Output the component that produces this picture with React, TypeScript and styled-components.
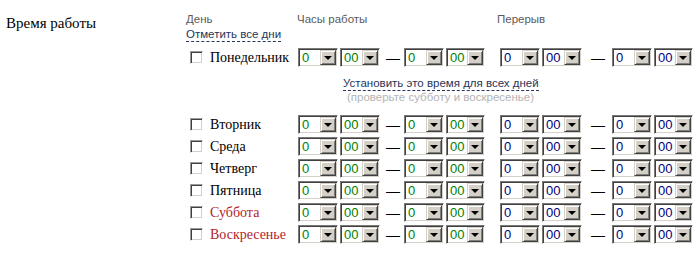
import styled, { createGlobalStyle } from "styled-components"

const GlobalStyle = createGlobalStyle`
body{
    margin: 0;
    background: #fff;
    font-family: "Liberation Serif", serif;
}
`;

const Page = styled.div`
    display: flex;
    padding-top: 12px;
`;

const SectionTitle = styled.div`
    width: 180px;
    padding-left: 6px;
    font-size: 15px;
    line-height: 18px;
    color: #000;
    padding-top: 2px;
`;

const Form = styled.div`
    display: flex;
    flex-direction: column;
`;

const HeaderRow = styled.div`
    display: flex;
    font-family: "Liberation Sans", sans-serif;
    font-size: 11.5px;
    line-height: 15px;
    color: #5a5a5a;
    margin-bottom: 6px;
`;

const HeadCell = styled.div<{ $w: number }>`
    width: ${p => p.$w}px;
    display: flex;
    flex-direction: column;
    align-items: flex-start;
`;

const DashedLink = styled.span`
    color: #26355a;
    border-bottom: 1px dashed #26355a;
    line-height: 14px;
    cursor: pointer;
`;

const Row = styled.div`
    display: flex;
    align-items: center;
    height: 19px;
    margin-bottom: 3px;
`;

const DayCell = styled.label<{ $weekend?: boolean }>`
    width: 112px;
    display: flex;
    align-items: center;
    padding-left: 4px;
    box-sizing: border-box;
    font-size: 14px;
    color: ${p => (p.$weekend ? "#b3242a" : "#000")};
`;

const Check = styled.span`
    width: 13px;
    height: 13px;
    box-sizing: border-box;
    background: #fff;
    border: 1px solid;
    border-color: #9a9a9a #fff #fff #9a9a9a;
    box-shadow: inset 1px 1px #404040, inset -1px -1px #d4d0c8;
    margin-right: 7px;
    flex: none;
`;

const Range = styled.div<{ $gap: number }>`
    display: flex;
    align-items: center;
    margin-right: ${p => p.$gap}px;
`;

const Dash = styled.span<{ $w: number }>`
    width: ${p => p.$w}px;
    text-align: center;
    font-family: "Liberation Sans", sans-serif;
    font-size: 14px;
    color: #000;
`;

const SelectBox = styled.div<{ $w: number }>`
    display: flex;
    width: ${p => p.$w}px;
    height: 19px;
    box-sizing: border-box;
    background: #fff;
    border: 1px solid;
    border-color: #7a7a7a #fff #fff #7a7a7a;
    box-shadow: inset 1px 1px #404040, inset -1px -1px #d4d0c8;
    padding: 1px;
    margin-right: 2px;
`;

const SelectValue = styled.span<{ $tone: string }>`
    flex: 1;
    padding-left: 2px;
    font-family: "Liberation Sans", sans-serif;
    font-size: 13px;
    line-height: 15px;
    color: ${p => p.$tone};
`;

const SelectButton = styled.span`
    width: 16px;
    height: 15px;
    box-sizing: border-box;
    background: #d4d0c8;
    border: 1px solid;
    border-color: #d4d0c8 #404040 #404040 #d4d0c8;
    box-shadow: inset 1px 1px #fff, inset -1px -1px #808080;
    display: flex;
    align-items: center;
    justify-content: center;

    &::after{
        content: "";
        border-left: 4px solid transparent;
        border-right: 4px solid transparent;
        border-top: 4px solid #000;
        margin-top: 1px;
    }
`;

const ApplyBlock = styled.div`
    display: flex;
    flex-direction: column;
    align-items: flex-start;
    padding-left: 157px;
    margin-top: 6px;
    margin-bottom: 11px;
    font-family: "Liberation Sans", sans-serif;
    font-size: 11.5px;
    line-height: 13px;
`;

const Hint = styled.span`
    color: #b4b4b4;
    padding-left: 4px;
`;

type selectProps = { value: string, width: number, tone: string }

const Select = ({ value, width, tone }: selectProps) => (
    <SelectBox $w={width}>
        <SelectValue $tone={tone}>{value}</SelectValue>
        <SelectButton />
    </SelectBox>
)

const TimeRange = ({ tone, dash, gap }: { tone: string, dash: number, gap: number }) => (
    <Range $gap={gap}>
        <Select value="0" width={40} tone={tone} />
        <Select value="00" width={40} tone={tone} />
        <Dash $w={dash}>—</Dash>
        <Select value="0" width={40} tone={tone} />
        <Select value="00" width={39} tone={tone} />
    </Range>
)

const DayRow = ({ name, weekend }: { name: string, weekend?: boolean }) => (
    <Row>
        <DayCell $weekend={weekend}><Check />{name}</DayCell>
        <TimeRange tone="#008000" dash={22} gap={13} />
        <TimeRange tone="#000080" dash={28} gap={0} />
    </Row>
)

const days = [
    { name: "Вторник" },
    { name: "Среда" },
    { name: "Четверг" },
    { name: "Пятница" },
    { name: "Суббота", weekend: true },
    { name: "Воскресенье", weekend: true },
]

export default function App() {
    return (<>
        <GlobalStyle />
        <Page>
            <SectionTitle>Время работы</SectionTitle>
            <Form>
                <HeaderRow>
                    <HeadCell $w={111}>
                        <span>День</span>
                        <DashedLink>Отметить все дни</DashedLink>
                    </HeadCell>
                    <HeadCell $w={200}>Часы работы</HeadCell>
                    <HeadCell $w={190}>Перерыв</HeadCell>
                </HeaderRow>
                <DayRow name="Понедельник" />
                <ApplyBlock>
                    <DashedLink>Установить это время для всех дней</DashedLink>
                    <Hint>(проверьте субботу и воскресенье)</Hint>
                </ApplyBlock>
                {days.map((d, i) => <DayRow key={i} name={d.name} weekend={d.weekend} />)}
            </Form>
        </Page>
    </>)
}
